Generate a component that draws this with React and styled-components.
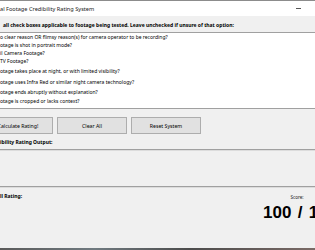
import React from "react";
import styled, { createGlobalStyle } from "styled-components";

const GlobalStyle = createGlobalStyle`
    html, body {
        margin: 0;
        padding: 0;
        background: #f0f0f0;
    }
    body {
        font-family: "Noto Sans", "DejaVu Sans", sans-serif;
        font-size: 5px;
        color: #000;
    }
`;

const Window = styled.div`
    width: 315px;
    height: 250px;
    overflow: hidden;
    display: flex;
    flex-direction: column;
    background: #f0f0f0;
`;

const TitleBar = styled.div`
    height: 15px;
    border-top: 1px solid #8c8c8c;
    background: #fff;
    display: flex;
    align-items: center;
    justify-content: space-between;
    padding-right: 14px;
    font-size: 5.6px;
    color: #1a1a1a;
`;

const Minimize = styled.span`
    width: 5px;
    height: 1px;
    background: #555;
`;

const Instruction = styled.div`
    height: 16px;
    display: flex;
    align-items: center;
    padding-left: 3px;
    padding-top: 1px;
    box-sizing: border-box;
    font-weight: bold;
    white-space: nowrap;
`;

const ListBox = styled.div`
    height: 77px;
    box-sizing: border-box;
    background: #fff;
    border-top: 1px solid #a0a0a0;
    border-bottom: 1px solid #a0a0a0;
    display: flex;
    flex-direction: column;
`;

const Item = styled.div`
    height: ${p => p.h}px;
    line-height: ${p => p.h}px;
    white-space: nowrap;
`;

const ButtonRow = styled.div`
    display: flex;
    gap: 4px;
    margin-top: 8px;
`;

const Button = styled.div`
    width: 70px;
    height: 17px;
    box-sizing: border-box;
    margin-left: ${p => p.offset || 0}px;
    background: #e1e1e1;
    border: 1px solid #adadad;
    display: flex;
    align-items: center;
    justify-content: center;
    white-space: nowrap;
    font-size: 5.2px;
`;

const SectionLabel = styled.div`
    height: 15px;
    display: flex;
    align-items: center;
    padding-top: 1px;
    box-sizing: border-box;
    font-weight: bold;
`;

const Separator = styled.div`
    height: 1px;
    background: #a0a0a0;
    border-bottom: 1px solid #dcdcdc;
`;

const OutputArea = styled.div`
    height: 35px;
`;

const RatingPanel = styled.div`
    flex: 1;
    display: flex;
    justify-content: space-between;
    padding-top: 5px;
`;

const RatingLabel = styled.div`
    font-weight: bold;
`;

const ScoreBox = styled.div`
    display: flex;
    flex-direction: column;
    align-items: center;
    padding-top: 1px;
    margin-right: -22px;
`;

const ScoreLabel = styled.div`
    font-size: 4.6px;
    color: #222;
    margin-left: -6px;
`;

const ScoreValue = styled.div`
    font-family: "Liberation Sans", Arial, sans-serif;
    font-weight: bold;
    font-size: 17px;
    word-spacing: 1.5px;
    margin-top: 3px;
    white-space: nowrap;
`;

const Taskbar = styled.div`
    height: 2px;
    background: linear-gradient(to right, #5a5a5a, #707a80 30%, #4c4c4c 60%, #7a6a66);
`;

const items = [
    ["o clear reason OR flimsy reason(s) for camera operator to be recording?", 8],
    ["otage is shot in portrait mode?", 8],
    ["il Camera Footage?", 8],
    ["TV Footage?", 9],
    ["otage takes place at night, or with limited visibility?", 11],
    ["otage uses Infra Red or similar night camera technology?", 10],
    ["otage ends abruptly without explanation?", 10],
    ["otage is cropped or lacks context?", 9]
];

export default function App() {
    return (
        <Window>
            <GlobalStyle />
            <TitleBar>
                <span>al Footage Credibility Rating System</span>
                <Minimize />
            </TitleBar>
            <Instruction>
                all check boxes applicable to footage being tested. Leave unchecked if unsure of that option:
            </Instruction>
            <ListBox>
                {items.map(([text, h]) => (
                    <Item key={text} h={h}>
                        {text}
                    </Item>
                ))}
            </ListBox>
            <ButtonRow>
                <Button offset={-17}>Calculate Rating!</Button>
                <Button>Clear All</Button>
                <Button>Reset System</Button>
            </ButtonRow>
            <SectionLabel>ibility Rating Output:</SectionLabel>
            <Separator />
            <OutputArea />
            <Separator />
            <RatingPanel>
                <RatingLabel>ll Rating:</RatingLabel>
                <ScoreBox>
                    <ScoreLabel>Score:</ScoreLabel>
                    <ScoreValue>100 / 100</ScoreValue>
                </ScoreBox>
            </RatingPanel>
            <Taskbar />
        </Window>
    );
}
